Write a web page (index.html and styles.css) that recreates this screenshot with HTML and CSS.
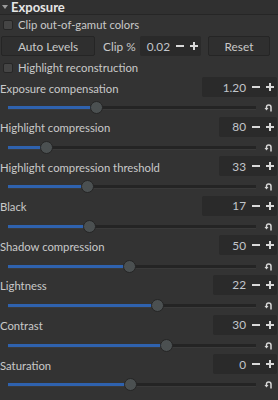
FILE: index.html
```html
<!DOCTYPE html>
<html>
<head>
<meta charset="utf-8">
<link rel="stylesheet" href="styles.css">
</head>
<body>
<div class="panel">
  <div class="header"><span class="tri"></span><span class="title">Exposure</span></div>
  <div class="check-row"><span class="check"></span><span>Clip out-of-gamut colors</span></div>
  <div class="btn-row">
    <div class="btn auto">Auto Levels</div>
    <span class="clip-label">Clip %</span>
    <div class="spin clip"><span class="val">0.02</span><span class="pm minus"></span><span class="pm plus"></span></div>
    <div class="btn reset">Reset</div>
  </div>
  <div class="check-row"><span class="check"></span><span>Highlight reconstruction</span></div>

  <div class="adj">
    <div class="adj-top"><span class="label">Exposure compensation</span><div class="spin w-xl"><span class="val">1.20</span><span class="pm minus"></span><span class="pm plus"></span></div></div>
    <div class="adj-bot"><div class="track"><div class="fill" style="width:35.9%"><span class="knob"></span></div></div><svg class="undo" viewBox="0 0 9 8"><path d="M2.5 5 V3.2 Q2.5 1 4.7 1 Q7 1 7 3.2 V7.5" /><path class="head" d="M0.5 4 H4.5 L2.5 6.5 Z"/></svg></div>
  </div>
  <div class="adj">
    <div class="adj-top"><span class="label">Highlight compression</span><div class="spin w-s"><span class="val">80</span><span class="pm minus"></span><span class="pm plus"></span></div></div>
    <div class="adj-bot"><div class="track"><div class="fill" style="width:15.7%"><span class="knob"></span></div></div><svg class="undo" viewBox="0 0 9 8"><path d="M2.5 5 V3.2 Q2.5 1 4.7 1 Q7 1 7 3.2 V7.5" /><path class="head" d="M0.5 4 H4.5 L2.5 6.5 Z"/></svg></div>
  </div>
  <div class="adj">
    <div class="adj-top"><span class="label">Highlight compression threshold</span><div class="spin w-s"><span class="val">33</span><span class="pm minus"></span><span class="pm plus"></span></div></div>
    <div class="adj-bot"><div class="track"><div class="fill" style="width:32.3%"><span class="knob"></span></div></div><svg class="undo" viewBox="0 0 9 8"><path d="M2.5 5 V3.2 Q2.5 1 4.7 1 Q7 1 7 3.2 V7.5" /><path class="head" d="M0.5 4 H4.5 L2.5 6.5 Z"/></svg></div>
  </div>
  <div class="adj">
    <div class="adj-top"><span class="label">Black</span><div class="spin w-xl"><span class="val">17</span><span class="pm minus"></span><span class="pm plus"></span></div></div>
    <div class="adj-bot"><div class="track"><div class="fill" style="width:33.1%"><span class="knob"></span></div></div><svg class="undo" viewBox="0 0 9 8"><path d="M2.5 5 V3.2 Q2.5 1 4.7 1 Q7 1 7 3.2 V7.5" /><path class="head" d="M0.5 4 H4.5 L2.5 6.5 Z"/></svg></div>
  </div>
  <div class="adj">
    <div class="adj-top"><span class="label">Shadow compression</span><div class="spin w-s"><span class="val">50</span><span class="pm minus"></span><span class="pm plus"></span></div></div>
    <div class="adj-bot"><div class="track"><div class="fill" style="width:49.2%"><span class="knob"></span></div></div><svg class="undo" viewBox="0 0 9 8"><path d="M2.5 5 V3.2 Q2.5 1 4.7 1 Q7 1 7 3.2 V7.5" /><path class="head" d="M0.5 4 H4.5 L2.5 6.5 Z"/></svg></div>
  </div>
  <div class="adj">
    <div class="adj-top"><span class="label">Lightness</span><div class="spin w-m"><span class="val">22</span><span class="pm minus"></span><span class="pm plus"></span></div></div>
    <div class="adj-bot"><div class="track"><div class="fill" style="width:60.5%"><span class="knob"></span></div></div><svg class="undo" viewBox="0 0 9 8"><path d="M2.5 5 V3.2 Q2.5 1 4.7 1 Q7 1 7 3.2 V7.5" /><path class="head" d="M0.5 4 H4.5 L2.5 6.5 Z"/></svg></div>
  </div>
  <div class="adj">
    <div class="adj-top"><span class="label">Contrast</span><div class="spin w-m"><span class="val">30</span><span class="pm minus"></span><span class="pm plus"></span></div></div>
    <div class="adj-bot"><div class="track"><div class="fill" style="width:64.1%"><span class="knob"></span></div></div><svg class="undo" viewBox="0 0 9 8"><path d="M2.5 5 V3.2 Q2.5 1 4.7 1 Q7 1 7 3.2 V7.5" /><path class="head" d="M0.5 4 H4.5 L2.5 6.5 Z"/></svg></div>
  </div>
  <div class="adj">
    <div class="adj-top"><span class="label">Saturation</span><div class="spin w-m"><span class="val">0</span><span class="pm minus"></span><span class="pm plus"></span></div></div>
    <div class="adj-bot"><div class="track"><div class="fill" style="width:49.6%"><span class="knob"></span></div></div><svg class="undo" viewBox="0 0 9 8"><path d="M2.5 5 V3.2 Q2.5 1 4.7 1 Q7 1 7 3.2 V7.5" /><path class="head" d="M0.5 4 H4.5 L2.5 6.5 Z"/></svg></div>
  </div>
</div>
</body>
</html>
```

FILE: styles.css
```css
html, body {
  margin: 0;
  padding: 0;
  background: #333333;
}
body {
  width: 278px;
  height: 400px;
  overflow: hidden;
  font-family: Lato, "Open Sans", sans-serif;
  font-size: 11.3px;
  color: #c9c9c9;
}
.panel {
  display: flex;
  flex-direction: column;
}
.header {
  height: 14px;
  display: flex;
  align-items: center;
  gap: 3px;
  padding-left: 2px;
  background: #303030;
  border-bottom: 1px solid #262626;
}
.tri {
  width: 0;
  height: 0;
  border-left: 3px solid transparent;
  border-right: 3px solid transparent;
  border-top: 4px solid #9a9a9a;
}
.title {
  font-weight: bold;
  font-size: 13px;
  color: #e6e6e6;
  line-height: 14px;
}
.check-row {
  height: 19px;
  display: flex;
  align-items: center;
  gap: 5px;
  padding-left: 3px;
}
.check {
  width: 8px;
  height: 8px;
  border: 1px solid #262626;
  border-radius: 2px;
  background: #454545;
}
.btn-row {
  height: 24px;
  display: flex;
  align-items: center;
  padding-left: 1px;
}
.btn {
  height: 20px;
  box-sizing: border-box;
  border: 1px solid #252525;
  border-radius: 2px;
  background: #2f2f2f;
  display: flex;
  align-items: center;
  justify-content: center;
  font-size: 11.8px;
}
.auto { width: 94px; }
.reset { width: 62px; margin-left: 7px; }
.clip-label { margin-left: 8px; width: 37px; font-size: 11.8px; }
.spin {
  height: 20px;
  box-sizing: border-box;
  border-radius: 2px;
  background: #2a2a2a;
  display: flex;
  align-items: center;
}
.spin .val {
  flex: 1;
  text-align: right;
  padding-right: 3px;
  color: #c2c6cc;
  font-size: 11.8px;
}
.pm {
  width: 14px;
  height: 20px;
  position: relative;
}
.pm::before, .pm::after {
  content: "";
  position: absolute;
  background: #d8d8d8;
}
.minus::before { left: 3px; top: 9px; width: 8px; height: 2px; }
.minus::after { display: none; }
.plus::before { left: 3px; top: 9px; width: 8px; height: 2px; }
.plus::after { left: 6px; top: 6px; width: 2px; height: 8px; }
.clip { width: 61px; }
.adj {
  height: 39.6px;
  display: flex;
  flex-direction: column;
}
.adj-top {
  height: 20px;
  display: flex;
  align-items: center;
  justify-content: space-between;
  padding-right: 1px;
}
.adj-top .label { padding-top: 2px; }
.w-xl { width: 75px; }
.w-m { width: 64px; }
.w-s { width: 58px; }
.adj-bot {
  flex: 1;
  display: flex;
  align-items: center;
  padding-left: 8px;
  padding-top: 3px;
}
.track {
  width: 248px;
  height: 3px;
  background: #242424;
  border-bottom: 1px solid #3a3a3a;
  position: relative;
}
.fill {
  height: 3px;
  background: #2f62ae;
  position: relative;
}
.knob {
  position: absolute;
  right: -6px;
  top: -5px;
  width: 11px;
  height: 11px;
  border-radius: 50%;
  background: #4b5051;
  border: 1px solid #252525;
}
.undo {
  width: 9px;
  height: 8px;
  margin-left: 8px;
  fill: none;
}
.undo path {
  stroke: #d8d8d8;
  stroke-width: 1.5;
}
.undo .head {
  fill: #d8d8d8;
  stroke: none;
}
```
